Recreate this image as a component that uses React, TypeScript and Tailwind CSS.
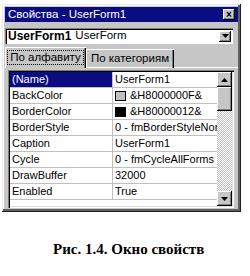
const rows = [
  { name: "(Name)", value: "UserForm1", selected: true },
  { name: "BackColor", value: "&H8000000F&", swatch: "#c0c0c0" },
  { name: "BorderColor", value: "&H80000012&", swatch: "#000000" },
  { name: "BorderStyle", value: "0 - fmBorderStyleNone" },
  { name: "Caption", value: "UserForm1" },
  { name: "Cycle", value: "0 - fmCycleAllForms" },
  { name: "DrawBuffer", value: "32000" },
  { name: "Enabled", value: "True" },
];

const raised =
  "bg-[#c6c6c6] shadow-[inset_-1px_-1px_#000000,inset_1px_1px_#ffffff,inset_-2px_-2px_#808080]";

function Arrow({ up }: { up?: boolean }) {
  return (
    <svg width="7" height="4" viewBox="0 0 7 4">
      <polygon points={up ? "3.5,0 7,4 0,4" : "0,0 7,0 3.5,4"} fill="#000" />
    </svg>
  );
}

export default function App() {
  return (
    <div className="w-[250px] h-[276px] bg-white font-['Liberation_Sans',Arial,sans-serif] text-[11.5px] text-black overflow-hidden">
      <div className="ml-[2px] mt-[4px] w-[239px] h-[208px] bg-[#c6c6c6] p-[3px] flex flex-col shadow-[inset_-1px_-1px_#202020,inset_1px_1px_#e8e8e8,inset_-3px_-3px_#606060,inset_2px_2px_#ffffff]">
        {/* title bar */}
        <div className="h-[15px] bg-[#0c0c82] flex items-center justify-between pl-[3px] pr-[3px]">
          <span className="text-white text-[11.5px] leading-none">Свойства - UserForm1</span>
          <div className={`w-[12px] h-[11px] flex items-center justify-center text-[10px] font-bold leading-none ${raised}`}>
            ×
          </div>
        </div>
        {/* object combo */}
        <div className="mt-[6px] h-[16px] w-[228px] bg-white flex items-center shadow-[inset_1px_1px_#808080,inset_2px_2px_#000000,inset_-1px_-1px_#ffffff]">
          <span className="pl-[3px] font-bold text-[12px] leading-none">UserForm1</span>
          <span className="pl-[4px] leading-none flex-1">UserForm</span>
          <div className={`w-[12px] h-[11px] mr-[2px] flex items-center justify-center ${raised}`}>
            <Arrow />
          </div>
        </div>
        {/* tabs */}
        <div className="mt-[3px] flex items-end h-[21px]">
          <div className="h-[21px] w-[81px] flex items-center justify-center bg-[#c6c6c6] shadow-[inset_1px_1px_#ffffff,inset_-1px_0_#000000,inset_-2px_0_#808080]">
            <span className="px-[2px] py-[1px] outline-1 outline-dotted outline-[#000] leading-none">По алфавиту</span>
          </div>
          <div className="h-[19px] w-[88px] flex items-center justify-center shadow-[inset_1px_1px_#ffffff,inset_-1px_0_#000000,inset_-2px_0_#808080,inset_0_-1px_#ffffff]">
            По категориям
          </div>
          <div className="flex-1 h-[1px] bg-white" />
        </div>
        {/* tab page */}
        <div className="flex-1 pl-[3px] pr-[4px] pb-[1px] pt-[2px]">
          <div className="h-full bg-white flex p-[2px] text-[11px] shadow-[inset_1px_1px_#808080,inset_2px_2px_#000000,inset_-1px_-1px_#ffffff,inset_-2px_-2px_#dfdfdf]">
            <div className="flex-1 flex flex-col overflow-hidden">
              {rows.map((r) => (
                <div key={r.name} className="h-[16px] flex border-b border-[#c0c0c0] shrink-0">
                  <div
                    className={`w-[103px] pl-[2px] flex items-center border-r border-[#c0c0c0] leading-none ${
                      r.selected ? "bg-[#0c0c82] text-white" : ""
                    }`}
                  >
                    {r.name}
                  </div>
                  <div className="flex-1 flex items-center pl-[2px] whitespace-nowrap overflow-hidden leading-none">
                    {r.swatch && (
                      <span
                        className="inline-block w-[11px] h-[10px] border border-black mr-[4px] shrink-0"
                        style={{ background: r.swatch }}
                      />
                    )}
                    {r.value}
                  </div>
                </div>
              ))}
            </div>
            <div className="w-[15px] flex flex-col">
              <div className={`h-[15px] flex items-center justify-center ${raised}`}>
                <Arrow up />
              </div>
              <div className={`h-[24px] ${raised}`} />
              <div className="flex-1 bg-[conic-gradient(#c0c0c0_25%,#ffffff_0_50%,#c0c0c0_0_75%,#ffffff_0)] bg-[length:2px_2px]" />
              <div className={`h-[15px] flex items-center justify-center ${raised}`}>
                <Arrow />
              </div>
            </div>
          </div>
        </div>
      </div>
      <div className="mt-[30px] pl-[53px] font-['Liberation_Serif',serif] font-bold text-[15px] leading-none">
        Рис. 1.4. Окно свойств
      </div>
    </div>
  );
}
